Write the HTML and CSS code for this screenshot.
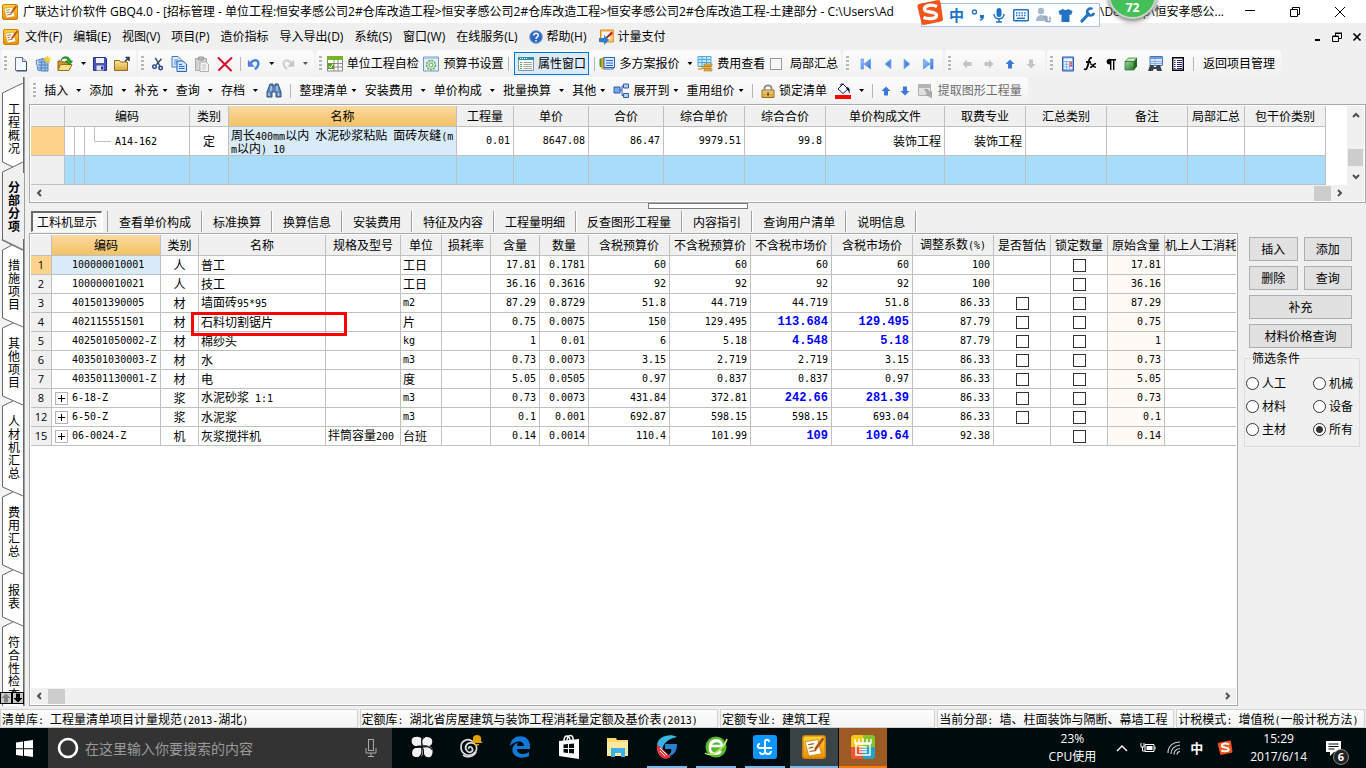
FILE: index.html
```html
<!DOCTYPE html>
<html lang="zh-CN">
<head>
<meta charset="utf-8">
<title>广联达计价软件 GBQ4.0</title>
<link rel="stylesheet" href="styles.css">
</head>
<body>
<svg class="defs" aria-hidden="true">
  <defs>
    <linearGradient id="gOrange" x1="0" y1="0" x2="0" y2="1"><stop offset="0" stop-color="#ffd83a"/><stop offset="1" stop-color="#f08c00"/></linearGradient>
    <linearGradient id="gBlue" x1="0" y1="0" x2="1" y2="1"><stop offset="0" stop-color="#a9cdf8"/><stop offset="1" stop-color="#2f6fd6"/></linearGradient>
    <linearGradient id="gGold" x1="0" y1="0" x2="0" y2="1"><stop offset="0" stop-color="#fbe7a0"/><stop offset="1" stop-color="#dba63a"/></linearGradient>
    <linearGradient id="gGreen" x1="0" y1="0" x2="1" y2="1"><stop offset="0" stop-color="#9ad89a"/><stop offset="1" stop-color="#1f7a2a"/></linearGradient>
    <symbol id="i-app" viewBox="0 0 16 16"><rect x=".5" y=".5" width="15" height="15" rx="1.5" fill="url(#gOrange)" stroke="#d07c08"/><path d="M2 4.5 10.500 3 13 12.500 4.500 14z" fill="#fffdf0" stroke="#c98a1c" stroke-width=".6"/><path d="M4 6.500l4-.8M4.500 8.700l3-.6M5 11l4.500-.8" stroke="#9a6420" stroke-width=".8"/><path d="M13.500 1.500 8.500 8.500l-.3 2 1.700-.9L15 2.700z" fill="#b4501a"/></symbol>
    <symbol id="i-new" viewBox="0 0 16 16"><path d="M2.500 1.500h7l4 4v9h-11z" fill="#f4f9ff" stroke="#5f7894"/><path d="M9.500 1.500v4h4" fill="#cfe0f2" stroke="#5f7894"/><path d="M13.500 6v9h-10" fill="none" stroke="#33465c"/></symbol>
    <symbol id="i-grid" viewBox="0 0 16 16"><path d="M1 4.500 8 2.500v12H3z" fill="#cfe2f8" stroke="#5485c0"/><path d="M7 3h6v12H6z" fill="#9fc1ea" stroke="#5485c0"/><path d="M3 6h9M3 9h10M3 12h10M5 4v10M10 4v11" stroke="#4a7dba" stroke-width=".8"/><path d="M12.500 0v7M9 3.500h7M10 1l5 5M15 1l-5 5" stroke="#f6cf2c" stroke-width="1.200"/></symbol>
    <symbol id="i-open" viewBox="0 0 16 16"><path d="M1 5h4l1 1h6v8H1z" fill="#c89633" stroke="#8a6414"/><path d="M3.500 8.500H15l-3 6H1z" fill="#fbe08a" stroke="#9a7018"/><path d="M4 4c3-3 7-2 7 1h-2.500l4 4 3-4h-2C13 0 6-1 4 4z" fill="#2faa2f" stroke="#137013" stroke-width=".7"/></symbol>
    <symbol id="i-save" viewBox="0 0 16 16"><path d="M1.500 1.500h12l1 1v12h-13z" fill="#4a55b8" stroke="#262f80"/><path d="M4 2h8v5H4z" fill="#eef1ff"/><path d="M4.500 9.500h7v5h-7z" fill="#dfe3f3"/><path d="M9 10.500h2v3H9z" fill="#262f80"/></symbol>
    <symbol id="i-folder" viewBox="0 0 16 16"><path d="M.5 4.500h5l1 1.500h7v8.500H.5z" fill="url(#gGold)" stroke="#8e6a1c"/><path d="M11 5.500 14.500 2M11.500 1.500h3.500v3.500" stroke="#25344c" stroke-width="1.500" fill="none"/></symbol>
    <symbol id="i-cut" viewBox="0 0 16 16"><path d="M5 1l5 9M12 2 6 9" stroke="#33465c" stroke-width="1.600"/><circle cx="4" cy="11" r="2" fill="none" stroke="#1d3f94" stroke-width="1.700"/><circle cx="11" cy="12.500" r="2" fill="none" stroke="#1d3f94" stroke-width="1.700"/></symbol>
    <symbol id="i-copy" viewBox="0 0 16 16"><path d="M1 .5h6l3 3V11H1z" fill="#ddebfb" stroke="#3a78c4"/><path d="M3 4h4M3 6h4M3 8h3" stroke="#5a94d8"/><path d="M6 5h6l3.500 3v7.500H6z" fill="#cfe3fa" stroke="#2563b5"/><path d="M8 8.500h3M8 10.500h5.500M8 12.500h5.500" stroke="#2f6fc4"/></symbol>
    <symbol id="i-paste" viewBox="0 0 16 16"><path d="M1.500 2.500h11v12h-11z" fill="#d3d3d3" stroke="#a9a9a9"/><path d="M4.500 1h5v3h-5z" fill="#bbb" stroke="#999"/><path d="M6 6h6l2.500 2v7.500H6z" fill="#f3f3f3" stroke="#b0b0b0"/><path d="M8 9h4M8 11h4M8 13h4" stroke="#c4c4c4"/></symbol>
    <symbol id="i-x" viewBox="0 0 16 16"><path d="M1.500 2 14 14.500M14.500 2 2 14" stroke="#d3142a" stroke-width="2" stroke-linecap="round"/></symbol>
    <symbol id="i-undo" viewBox="0 0 16 16"><path d="M4 8C6 3 13 2 13 7.500c0 3-2 5-4 6.500" fill="none" stroke="#4b83dc" stroke-width="2.800"/><path d="M1 3v8h8z" fill="#4b83dc"/></symbol>
    <symbol id="i-redo" viewBox="0 0 16 16"><path d="M12 8C10 3 3 2 3 7.500c0 3 2 5 4 6.500" fill="none" stroke="#cfcfcf" stroke-width="2.400"/><path d="M15 3v8H7z" fill="#c6c6c6"/></symbol>
    <symbol id="i-check" viewBox="0 0 16 16"><path d="M.5 1h15v14H.5z" fill="#fff" stroke="#888"/><path d="M0 0h16v4H0z" fill="#72b626"/><path d="M.5 7.500h15M.5 11h15M7 4v11M11 4v11" stroke="#888"/><path d="M1 7h6v6H1z" fill="#5aa01c"/><path d="M2 10l1.500 2L6 8" stroke="#fff" fill="none"/></symbol>
    <symbol id="i-gear" viewBox="0 0 16 16"><path d="M.5 1h15v14H.5z" fill="#e3eef8" stroke="#7797b4"/><path d="M1 1h14v2H1z" fill="#a9c7e6"/><circle cx="8" cy="9" r="4.500" fill="#d5efd5" stroke="#5da45d" stroke-width="1.500" stroke-dasharray="2 1"/><circle cx="8" cy="9" r="2" fill="#fff" stroke="#5da45d"/></symbol>
    <symbol id="i-prop" viewBox="0 0 16 16"><path d="M.5 1.500h15v13H.5z" fill="#f7fbf7" stroke="#87909a"/><path d="M0 1h16v3H0z" fill="#2c8fa8"/><path d="M2 2.500h8" stroke="#fff" stroke-dasharray="1 1"/><path d="M2 6.500h2M2 8.500h2M2 10.500h2M2 12.500h2" stroke="#58a858"/><path d="M5.500 6.500H14M5.500 8.500H14M5.500 10.500H14M5.500 12.500H14" stroke="#a3aaa3"/></symbol>
    <symbol id="i-multi" viewBox="0 0 16 16"><path d="M.5 3 2.500 2v10l-2-2z" fill="#29a329"/><path d="M2.500 2.500 5 1.500v12L2.500 12z" fill="#f2a51c" stroke="#b87d12" stroke-width=".5"/><path d="M5 1.500h10.500v10H5z" fill="#d9ebff" stroke="#2765c6"/><path d="M7 4.500h7M7 7h7M7 9.500h7" stroke="#2765c6"/><path d="M5 13h9l1-1.500" stroke="#2765c6" fill="none"/></symbol>
    <symbol id="i-fee" viewBox="0 0 16 16"><path d="M1 .5h13v10H1z" fill="#bfe5fb" stroke="#56a7da"/><path d="M1 3.500h13M1 6.500h13M5 1v10M9.500 1v10" stroke="#56a7da"/><path d="M7 8h8v2H7zM5 10.500h9v2H5zM7 13h8v2H7z" fill="#e8b64c" stroke="#a87418" stroke-width=".6"/><path d="M1 12h4v2H1z" fill="#e8b64c"/></symbol>
    <symbol id="i-first" viewBox="0 0 12 12"><path d="M1 1h2.500v10H1zM10.500 1v10L4 6z" fill="url(#gBlue)" stroke="#5d94e8" stroke-width=".7"/></symbol>
    <symbol id="i-prev" viewBox="0 0 8 12"><path d="M7 1v10L1 6z" fill="#4f87e0" stroke="#8ab3f0" stroke-width=".8"/></symbol>
    <symbol id="i-next" viewBox="0 0 8 12"><path d="M1 1v10l6-5z" fill="#4f87e0" stroke="#8ab3f0" stroke-width=".8"/></symbol>
    <symbol id="i-last" viewBox="0 0 12 12"><path d="M8.500 1H11v10H8.500zM1.500 1v10L8 6z" fill="url(#gBlue)" stroke="#5d94e8" stroke-width=".7"/></symbol>
    <symbol id="i-up" viewBox="0 0 10 10"><path d="M5 .5 9.500 5H7v4.500H3V5H.5z"/></symbol>
    <symbol id="i-down" viewBox="0 0 10 10"><path d="M5 9.500.5 5H3V.5h4V5h2.500z"/></symbol>
    <symbol id="i-left" viewBox="0 0 10 10"><path d="M.5 5 5 .5V3h4.500v4H5v2.500z"/></symbol>
    <symbol id="i-right" viewBox="0 0 10 10"><path d="M9.500 5 5 .5V3H.5v4H5v2.500z"/></symbol>
    <symbol id="i-calc" viewBox="0 0 12 16"><path d="M.5 1h11v14H.5z" fill="#8fb2ea" stroke="#2f57a4"/><path d="M2 2.500h8v2.500H2z" fill="#eef5ff"/><path d="M2 7h8M2 9.500h8M2 12h8" stroke="#fff" stroke-width="1.500" stroke-dasharray="2 1"/><path d="M8 7h2M8 9.500h2" stroke="#d33" stroke-width="1.500"/></symbol>
    <symbol id="i-fx" viewBox="0 0 14 14"><path d="M9 1C6 0 6 4 5 8s-2 5-4 4M3 5h5" fill="none" stroke="#000" stroke-width="1.800"/><path d="M7 7c3-1 2 4 6 3M13 6.500c-3 0-3 4-6 4" fill="none" stroke="#000" stroke-width="1.400"/></symbol>
    <symbol id="i-para" viewBox="0 0 10 12"><path d="M4 1h6v1.500H4zM4 .8C-.5.8-.5 6.500 4 6.500z"/><path d="M4.700 1v11M7.700 1v11" stroke="#000" stroke-width="1.400"/></symbol>
    <symbol id="i-cube" viewBox="0 0 14 14"><path d="M1 4.500 4.500 1H13L10 4.500z" fill="#bfe8b6" stroke="#2c6a2c" stroke-width=".7"/><path d="M1 4.500h9V13H1z" fill="url(#gGreen)" stroke="#2c6a2c" stroke-width=".7"/><path d="M10 4.500 13 1v8.500L10 13z" fill="#236323"/></symbol>
    <symbol id="i-findwin" viewBox="0 0 16 16"><path d="M3 .5h12.500v9H3z" fill="#dbe8fa" stroke="#4677bd"/><path d="M3 1h12.500v2H3z" fill="#6d9be0"/><path d="M4 5.500h11M4 7.500h11M8 3v6" stroke="#8caedd"/><path d="M3 9h3l1 2h2l1-2h3l2 6h-5l-.5-2h-3L6 15H1z" fill="#39424f"/></symbol>
    <symbol id="i-list" viewBox="0 0 12 14"><path d="M.7.700h10.600v12.600H.7z" fill="#fff" stroke="#000" stroke-width="1.400"/><path d="M2 3.500h1.500M5 3.500h5M2 5.500h1.500M5 5.500h5M2 7.500h1.500M5 7.500h5M2 9.500h1.500M5 9.500h5M2 11.500h1.500M5 11.500h5" stroke="#22227a"/></symbol>
    <symbol id="i-binoc" viewBox="0 0 16 16"><path d="M4 1h3v2h2V1h3l3 8v5h-5V9H6v5H1V9z" fill="#5f86b8" stroke="#31527f"/><path d="M5 3v5M11 3v5M3 10v3M12.500 10v3" stroke="#c5daf2" stroke-width="1.200"/></symbol>
    <symbol id="i-tree" viewBox="0 0 16 16"><path d="M1 4h6v6H1z" fill="#79a7ea" stroke="#2d5daa"/><path d="M10.500 1h5v4h-5zM10.500 10.500h5v4h-5z" fill="#b3d0f7" stroke="#2d5daa"/><path d="M7 7h2M10 3H9v9.500h1.500" stroke="#2d5daa" fill="none"/></symbol>
    <symbol id="i-lock" viewBox="0 0 14 14"><path d="M3.500 6V4C3.500.500 10.500.500 10.500 4v2" fill="none" stroke="#8d8d8d" stroke-width="1.800"/><path d="M1 6h12v7.500H1z" fill="url(#gGold)" stroke="#9a6f18"/><path d="M1.500 8h11M1.500 10.500h11" stroke="#c38f2c" stroke-width=".7"/><path d="M6.300 8.500h1.500v3H6.300z" fill="#503800"/></symbol>
    <symbol id="i-fill" viewBox="0 0 16 16"><path d="M0 12h16v4H0z" fill="red"/><path d="M3 6 8 1l5 5-5 4.500z" fill="#fff" stroke="#16165c"/><path d="M6 3v-2h2.500" stroke="#16165c" fill="none"/><path d="M11 4c4 0 4 3 3.500 7-1-3-1.500-4-3-5z" fill="#12124c"/></symbol>
    <symbol id="i-extract" viewBox="0 0 16 16"><path d="M.5 1.500h12v11H.5z" fill="#e0e0e0" stroke="#b0b0b0"/><path d="M0 1h13v4H0z" fill="#b4b4b4"/><path d="M6 6l3 5-2 .5 7 4V8l-2 1-2.500-3z" fill="#a9a9a9"/></symbol>
    <symbol id="i-help" viewBox="0 0 14 14"><circle cx="7" cy="7" r="6.400" fill="#2d67c4" stroke="#8aa7d0"/><path d="M4.700 5.500C4.700 2.500 9.500 2.700 9.300 5.400 9.200 7 7 6.800 7 9M7 10v1.600" fill="none" stroke="#fff" stroke-width="1.500"/></symbol>
    <symbol id="i-pay" viewBox="0 0 16 16"><path d="M2.500 1h12.800v12H2.500z" fill="#f7cf80" stroke="#e28a18"/><path d="M4 3h8v7H4z" fill="#fff"/><path d="M13.500 2.500 7 9l1.500 1L15 4.500z" fill="#c02020"/><path d="M1 9h5V6l5 5-5 5v-3H1z" fill="#2f7ecb"/></symbol>
    <symbol id="i-sogou" viewBox="0 0 28 28"><path d="M3 5 22 1q2 0 2.500 2L27 20q0 2-2 2.500L8 26q-2 .5-2.500-2L1.500 8Q1 5.500 3 5z" fill="#f2541b"/><path d="M21 7.500C14 4.500 8 7 8.500 10.500S20 12 20.500 16 13 20.500 7.500 18.500" fill="none" stroke="#fff" stroke-width="3.400"/></symbol>
  </defs>
</svg>

<header class="titlebar">
  <svg class="ic16"><use href="#i-app"/></svg>
  <span class="title-text">广联达计价软件 GBQ4.0 - [招标管理 - 单位工程:恒安孝感公司2#仓库改造工程&gt;恒安孝感公司2#仓库改造工程&gt;恒安孝感公司2#仓库改造工程-土建部分 - C:\Users\Ad</span>
  <span class="title-end"><span>\De</span><span>p\恒安孝感公...</span></span>
  <div class="winbtns">
    <button aria-label="最小化"><svg width="12" height="12"><path d="M1 4.500h10" stroke="#000"/></svg></button>
    <button aria-label="还原"><svg width="12" height="12"><path d="M1.500 3.500h7v7h-7zM3.500 3V1.500h7v7H9" fill="none" stroke="#000"/></svg></button>
    <button aria-label="关闭"><svg width="12" height="12"><path d="M1 1l10 10M11 1 1 11" stroke="#000"/></svg></button>
  </div>
  <div class="ime">
    <svg class="ime-logo"><use href="#i-sogou"/></svg>
    <b>中</b>
    <svg width="14" height="16"><circle cx="3.500" cy="5" r="2" fill="none" stroke="#2272c4" stroke-width="1.400"/><path d="M9 8h4c0 4-1 5-4 6l-.3-1.500c1.500-.5 1.800-1 1.800-1.500H9z" fill="#2272c4"/></svg>
    <svg width="14" height="16"><rect x="4.500" y="1" width="5" height="9" rx="2.500" fill="#2272c4"/><path d="M2 7c0 6.500 10 6.500 10 0M7 12v3M4 15h6" fill="none" stroke="#2272c4" stroke-width="1.500"/></svg>
    <svg width="16" height="14"><rect x=".7" y="1.700" width="14.600" height="11" rx="1" fill="#fff" stroke="#2272c4" stroke-width="1.500"/><path d="M3 5h10.500M3 7.500h10.500" stroke="#2272c4" stroke-width="1.500" stroke-dasharray="1.500 1.200"/><path d="M4 10.300h8" stroke="#2272c4" stroke-width="1.500"/></svg>
    <svg width="16" height="16"><circle cx="6" cy="4" r="3.200" fill="#a9b8cc"/><path d="M1 14c0-8 10-8 10 0z" fill="#a9b8cc"/><path d="M8 9.500h3V15M12 9.500v5.200h3V9.500" fill="none" stroke="#8fa3be" stroke-width="1.300"/></svg>
    <svg width="15" height="16"><path d="M5 2c1.500 1.500 3.500 1.500 5 0l4.500 2-1.300 4-1.700-.5V15h-8V7.500L1.800 8 .5 4z" fill="#2272c4"/></svg>
    <svg width="15" height="16"><path d="M2 14 8.500 7" stroke="#2272c4" stroke-width="3.200" stroke-linecap="round"/><path d="M12.500 2A3.500 3.500 0 1 0 14 6" fill="none" stroke="#2272c4" stroke-width="2.600"/></svg>
  </div>
  <div class="ball">72</div>
</header>

<nav class="menubar">
  <svg class="ic16"><use href="#i-app"/></svg>
  <button>文件(F)</button><button>编辑(E)</button><button>视图(V)</button><button>项目(P)</button><button>造价指标</button><button>导入导出(D)</button><button>系统(S)</button><button>窗口(W)</button><button>在线服务(L)</button>
  <button class="with-ic"><svg class="ic14"><use href="#i-help"/></svg>帮助(H)</button>
  <button class="with-ic"><svg class="ic16"><use href="#i-pay"/></svg>计量支付</button>
  <div class="mdi">
    <button aria-label="最小化窗口"><svg width="8" height="10"><path d="M1 8h5" stroke="#000" stroke-width="2"/></svg></button>
    <button aria-label="还原窗口"><svg width="10" height="10"><path d="M.5 4.500h6v5h-6zM3.500 4V1.500h6v5H7M.5 4h6M3 1h7" fill="none" stroke="#000"/></svg></button>
    <button aria-label="关闭窗口"><svg width="10" height="10"><path d="M1.500 1.500l7 7M8.500 1.500l-7 7" stroke="#000" stroke-width="1.700"/></svg></button>
  </div>
</nav>

<div class="toolrow">
  <div class="tg g1"><i class="grip"></i><button aria-label="新建"><svg class="ic16"><use href="#i-new"/></svg></button><button aria-label="新建工程"><svg class="ic16"><use href="#i-grid"/></svg></button><button aria-label="打开" class="dd"><svg class="ic16"><use href="#i-open"/></svg><i class="arr"></i></button><button aria-label="保存"><svg class="ic16"><use href="#i-save"/></svg></button><button aria-label="另存"><svg class="ic16"><use href="#i-folder"/></svg></button></div>
  <div class="tg g2"><i class="grip"></i><button aria-label="剪切"><svg class="ic14"><use href="#i-cut"/></svg></button><button aria-label="复制"><svg class="ic16"><use href="#i-copy"/></svg></button><button aria-label="粘贴"><svg class="ic16"><use href="#i-paste"/></svg></button><button aria-label="删除"><svg class="ic16"><use href="#i-x"/></svg></button><i class="sep"></i><button aria-label="撤消" class="dd"><svg class="ic14"><use href="#i-undo"/></svg><i class="arr"></i></button><button aria-label="恢复" class="dd"><svg class="ic14"><use href="#i-redo"/></svg><i class="arr dim"></i></button></div>
  <div class="tg g3"><i class="grip"></i><button class="lb"><svg class="ic16"><use href="#i-check"/></svg>单位工程自检</button><button class="lb"><svg class="ic16"><use href="#i-gear"/></svg>预算书设置</button><i class="sep"></i><button class="lb pressed"><svg class="ic16"><use href="#i-prop"/></svg>属性窗口</button><i class="sep"></i><button class="dd"><span class="lb"><svg class="ic16"><use href="#i-multi"/></svg>多方案报价</span><i class="arr"></i></button><button class="lb"><svg class="ic16"><use href="#i-fee"/></svg>费用查看</button><label class="partial"><input type="checkbox">局部汇总</label></div>
  <div class="tg g4"><i class="grip"></i><button aria-label="首个"><svg width="12" height="12"><use href="#i-first"/></svg></button><button aria-label="上一个"><svg width="8" height="12"><use href="#i-prev"/></svg></button><button aria-label="下一个"><svg width="8" height="12"><use href="#i-next"/></svg></button><button aria-label="末个"><svg width="12" height="12"><use href="#i-last"/></svg></button></div>
  <div class="tg g4"><i class="grip"></i><button aria-label="左移" class="ar off"><svg class="ic10"><use href="#i-left"/></svg></button><button aria-label="右移" class="ar off"><svg class="ic10"><use href="#i-right"/></svg></button><button aria-label="上移" class="ar"><svg class="ic10"><use href="#i-up"/></svg></button><button aria-label="下移" class="ar off"><svg class="ic10"><use href="#i-down"/></svg></button></div>
  <div class="tg g6"><i class="grip"></i><button aria-label="计算器"><svg width="12" height="16"><use href="#i-calc"/></svg></button><button aria-label="函数"><svg class="ic14"><use href="#i-fx"/></svg></button><button aria-label="段落"><svg width="10" height="12"><use href="#i-para"/></svg></button><button aria-label="图形"><svg class="ic14"><use href="#i-cube"/></svg></button><button aria-label="查找"><svg class="ic16"><use href="#i-findwin"/></svg></button><button aria-label="列表"><svg width="12" height="14"><use href="#i-list"/></svg></button><i class="sep"></i><button>返回项目管理</button></div>
</div>

<div class="body">
  <nav class="side">
    <div class="side-top"></div>
    <svg class="joint" viewBox="0 0 24 12"><path d="M2.500 12V10L23 0v12z" fill="#fff"/><path d="M2.500 12V10L23 0" fill="none" stroke="#696969"/></svg>
    <a href="#gk">工程概况</a>
    <svg class="joint" viewBox="0 0 24 12"><path d="M2 0h22v12H2z" fill="#f0f0f0"/><path d="M3 0h20v1L12 6z" fill="#fff"/><path d="M2.500 0v1L13 6M2.500 12v-1L23 1" fill="none" stroke="#696969"/></svg>
    <a href="#fb" class="on" aria-current="page">分部分项</a>
    <svg class="joint" viewBox="0 0 24 12"><path d="M3 0h20v11z" fill="#f0f0f0"/><path d="M3 12v-1L13 6l10 5v1z" fill="#fff"/><path d="M2.500 12v-1L12 6" fill="none" stroke="#696969"/><path d="M2.500 0v1L23 11" fill="none" stroke="#7a7a7a" stroke-width="1.600"/></svg>
    <a href="#cs">措施项目</a>
    <svg class="joint" viewBox="0 0 24 12"><path d="M3 0h20v12H3l10-6z" fill="#fff"/><path d="M2.500 0v1L23 10M2.500 12v-1L13 6" fill="none" stroke="#696969"/></svg>
    <a href="#qt">其他项目</a>
    <svg class="joint" viewBox="0 0 24 12"><path d="M3 0h20v12H3l10-6z" fill="#fff"/><path d="M2.500 0v1L23 10M2.500 12v-1L13 6" fill="none" stroke="#696969"/></svg>
    <a href="#rc">人材机汇总</a>
    <svg class="joint" viewBox="0 0 24 12"><path d="M3 0h20v12H3l10-6z" fill="#fff"/><path d="M2.500 0v1L23 10M2.500 12v-1L13 6" fill="none" stroke="#696969"/></svg>
    <a href="#fy">费用汇总</a>
    <svg class="joint" viewBox="0 0 24 12"><path d="M3 0h20v12H3l10-6z" fill="#fff"/><path d="M2.500 0v1L23 10M2.500 12v-1L13 6" fill="none" stroke="#696969"/></svg>
    <a href="#bb">报表</a>
    <svg class="joint" viewBox="0 0 24 12"><path d="M3 0h20v12H3l10-6z" fill="#fff"/><path d="M2.500 0v1L23 10M2.500 12v-1L13 6" fill="none" stroke="#696969"/></svg>
    <a href="#fh">符合性检查</a>
    <div class="side-scroll">
      <button aria-label="向上" disabled><svg class="ic10" fill="#808080"><use href="#i-up"/></svg></button>
      <button aria-label="向下"><svg class="ic10"><use href="#i-down"/></svg></button>
    </div>
  </nav>

  <div class="work">
    <div class="toolrow second">
      <div class="tg g7"><i class="grip"></i>
        <button class="dd">插入<i class="arr"></i></button><button class="dd">添加<i class="arr"></i></button><button class="dd tight">补充<i class="arr"></i></button><button class="dd">查询<i class="arr"></i></button><button class="dd">存档<i class="arr"></i></button><button aria-label="查找"><svg class="ic16"><use href="#i-binoc"/></svg></button><i class="sep"></i><button class="dd tight">整理清单<i class="arr"></i></button><button class="dd">安装费用<i class="arr"></i></button><button class="dd">单价构成<i class="arr"></i></button><button class="dd">批量换算<i class="arr"></i></button><button class="dd tight">其他<i class="arr"></i></button><button class="dd tight"><svg class="ic16"><use href="#i-tree"/></svg>展开到<i class="arr"></i></button><button class="dd tight">重用组价<i class="arr"></i></button><i class="sep"></i><button class="lb"><svg class="ic14"><use href="#i-lock"/></svg>锁定清单</button><button class="dd" aria-label="填充颜色"><svg class="ic16"><use href="#i-fill"/></svg><i class="arr"></i></button><i class="sep"></i><button aria-label="上移" class="ar"><svg class="ic10"><use href="#i-up"/></svg></button><button aria-label="下移" class="ar"><svg class="ic10"><use href="#i-down"/></svg></button><button class="lb muted"><svg class="ic16"><use href="#i-extract"/></svg>提取图形工程量</button>
      </div>
    </div>

    <section class="panel top">
      <div class="top-view">
        <div class="clip">
          <table class="grid upper">
            <colgroup><col class="w34"><col class="w125"><col class="w39"><col class="w228"><col class="w57"><col class="w75"><col class="w75"><col class="w81"><col class="w81"><col class="w119"><col class="w81"><col class="w81"><col class="w81"><col class="w57"><col class="w81"></colgroup>
            <thead><tr><th></th><th>编码</th><th>类别</th><th class="sel">名称</th><th>工程量</th><th>单价</th><th>合价</th><th>综合单价</th><th>综合合价</th><th>单价构成文件</th><th>取费专业</th><th>汇总类别</th><th>备注</th><th>局部汇总</th><th>包干价类别</th></tr></thead>
            <tbody>
              <tr><td class="cur"></td><td class="tree n"><svg width="50" height="28"><path d="M9.500 0v28M19.500 0v28M29.500 0v14.500H46" fill="none" stroke="#c0c0c0"/></svg><span>A14-162</span></td><td class="c">定</td><td class="name">周长<span class="n">400mm</span>以内<span class="n"> </span>水泥砂浆粘贴<span class="n"> </span>面砖灰缝<span class="n">(m</span><br><span class="n">m</span>以内<span class="n">) 10</span></td><td class="r n">0.01</td><td class="r n">8647.08</td><td class="r n">86.47</td><td class="r n">9979.51</td><td class="r n">99.8</td><td class="r">装饰工程</td><td class="r">装饰工程</td><td></td><td></td><td></td><td></td></tr>
              <tr class="hl"><td></td><td class="tree"><svg width="50" height="28"><path d="M9.500 0v28M19.500 0v28" fill="none" stroke="#c0c0c0"/></svg></td><td></td><td></td><td></td><td></td><td></td><td></td><td></td><td></td><td></td><td></td><td></td><td></td><td></td></tr>
            </tbody>
          </table>
        </div>
        <div class="vscroll"><svg width="8" height="6"><path d="M1 5l3-3 3 3" fill="none" stroke="#505050" stroke-width="2"/></svg><i></i><svg width="8" height="6"><path d="M1 1l3 3 3-3" fill="none" stroke="#505050" stroke-width="2"/></svg></div>
      </div>
      <div class="hscroll end"><svg width="6" height="8"><path d="M5 1 2 4l3 3" fill="none" stroke="#505050" stroke-width="2"/></svg><i></i><svg width="6" height="8"><path d="M1 1l3 3-3 3" fill="none" stroke="#505050" stroke-width="2"/></svg></div>
    </section>

    <div class="splitter"><i></i></div>

    <div class="tabs" role="tablist">
      <button role="tab" aria-selected="true" class="active">工料机显示</button><button role="tab">查看单价构成</button><button role="tab">标准换算</button><button role="tab">换算信息</button><button role="tab">安装费用</button><button role="tab">特征及内容</button><button role="tab">工程量明细</button><button role="tab">反查图形工程量</button><button role="tab">内容指引</button><button role="tab">查询用户清单</button><button role="tab">说明信息</button>
    </div>

    <div class="lower-row">
      <section class="panel bottom">
        <div class="clip fill">
          <table class="grid lower">
            <colgroup><col class="w21"><col class="w109"><col class="w38"><col class="w127"><col class="w75"><col class="w41"><col class="w49"><col class="w49"><col class="w49"><col class="w81"><col class="w81"><col class="w81"><col class="w81"><col class="w81"><col class="w57"><col class="w57"><col class="w57"><col class="w81"></colgroup>
            <thead><tr><th></th><th class="sel">编码</th><th>类别</th><th>名称</th><th>规格及型号</th><th>单位</th><th>损耗率</th><th>含量</th><th>数量</th><th>含税预算价</th><th>不含税预算价</th><th>不含税市场价</th><th>含税市场价</th><th>调整系数<span class="n">(%)</span></th><th>是否暂估</th><th>锁定数量</th><th>原始含量</th><th class="l">机上人工消耗</th></tr></thead>
            <tbody>
              <tr><td class="no cur">1</td><td class="n code pick">100000010001</td><td class="c">人</td><td>普工</td><td></td><td>工日</td><td></td><td class="r n">17.81</td><td class="r n">0.1781</td><td class="r n">60</td><td class="r n">60</td><td class="r n">60</td><td class="r n">60</td><td class="r n">100</td><td></td><td class="c"><input type="checkbox" aria-label="锁定数量 1"></td><td class="r n org">17.81</td><td></td></tr>
              <tr><td class="no">2</td><td class="n code">100000010021</td><td class="c">人</td><td>技工</td><td></td><td>工日</td><td></td><td class="r n">36.16</td><td class="r n">0.3616</td><td class="r n">92</td><td class="r n">92</td><td class="r n">92</td><td class="r n">92</td><td class="r n">100</td><td></td><td class="c"><input type="checkbox" aria-label="锁定数量 2"></td><td class="r n org">36.16</td><td></td></tr>
              <tr><td class="no">3</td><td class="n code">401501390005</td><td class="c">材</td><td>墙面砖<span class="n">95*95</span></td><td></td><td class="n">m2</td><td></td><td class="r n">87.29</td><td class="r n">0.8729</td><td class="r n">51.8</td><td class="r n">44.719</td><td class="r n">44.719</td><td class="r n">51.8</td><td class="r n">86.33</td><td class="c"><input type="checkbox" aria-label="是否暂估 3"></td><td class="c"><input type="checkbox" aria-label="锁定数量 3"></td><td class="r n org">87.29</td><td></td></tr>
              <tr><td class="no">4</td><td class="n code">402115551501</td><td class="c">材</td><td class="host">石料切割锯片<i class="redbox"></i></td><td></td><td>片</td><td></td><td class="r n">0.75</td><td class="r n">0.0075</td><td class="r n">150</td><td class="r n">129.495</td><td class="r n b">113.684</td><td class="r n b">129.495</td><td class="r n">87.79</td><td class="c"><input type="checkbox" aria-label="是否暂估 4"></td><td class="c"><input type="checkbox" aria-label="锁定数量 4"></td><td class="r n org">0.75</td><td></td></tr>
              <tr><td class="no">5</td><td class="n code">402501050002-Z</td><td class="c">材</td><td>棉纱头</td><td></td><td class="n">kg</td><td></td><td class="r n">1</td><td class="r n">0.01</td><td class="r n">6</td><td class="r n">5.18</td><td class="r n b">4.548</td><td class="r n b">5.18</td><td class="r n">87.79</td><td class="c"><input type="checkbox" aria-label="是否暂估 5"></td><td class="c"><input type="checkbox" aria-label="锁定数量 5"></td><td class="r n org">1</td><td></td></tr>
              <tr><td class="no">6</td><td class="n code">403501030003-Z</td><td class="c">材</td><td>水</td><td></td><td class="n">m3</td><td></td><td class="r n">0.73</td><td class="r n">0.0073</td><td class="r n">3.15</td><td class="r n">2.719</td><td class="r n">2.719</td><td class="r n">3.15</td><td class="r n">86.33</td><td class="c"><input type="checkbox" aria-label="是否暂估 6"></td><td class="c"><input type="checkbox" aria-label="锁定数量 6"></td><td class="r n org">0.73</td><td></td></tr>
              <tr><td class="no">7</td><td class="n code">403501130001-Z</td><td class="c">材</td><td>电</td><td></td><td>度</td><td></td><td class="r n">5.05</td><td class="r n">0.0505</td><td class="r n">0.97</td><td class="r n">0.837</td><td class="r n">0.837</td><td class="r n">0.97</td><td class="r n">86.33</td><td class="c"><input type="checkbox" aria-label="是否暂估 7"></td><td class="c"><input type="checkbox" aria-label="锁定数量 7"></td><td class="r n org">5.05</td><td></td></tr>
              <tr><td class="no">8</td><td class="n"><button class="exp" aria-label="展开"></button>6-18-Z</td><td class="c">浆</td><td>水泥砂浆<span class="n"> 1:1</span></td><td></td><td class="n">m3</td><td></td><td class="r n">0.73</td><td class="r n">0.0073</td><td class="r n">431.84</td><td class="r n">372.81</td><td class="r n b">242.66</td><td class="r n b">281.39</td><td class="r n">86.33</td><td class="c"><input type="checkbox" aria-label="是否暂估 8"></td><td class="c"><input type="checkbox" aria-label="锁定数量 8"></td><td class="r n org">0.73</td><td></td></tr>
              <tr><td class="no">12</td><td class="n"><button class="exp" aria-label="展开"></button>6-50-Z</td><td class="c">浆</td><td>水泥浆</td><td></td><td class="n">m3</td><td></td><td class="r n">0.1</td><td class="r n">0.001</td><td class="r n">692.87</td><td class="r n">598.15</td><td class="r n">598.15</td><td class="r n">693.04</td><td class="r n">86.33</td><td class="c"><input type="checkbox" aria-label="是否暂估 12"></td><td class="c"><input type="checkbox" aria-label="锁定数量 12"></td><td class="r n org">0.1</td><td></td></tr>
              <tr><td class="no">15</td><td class="n"><button class="exp" aria-label="展开"></button>06-0024-Z</td><td class="c">机</td><td>灰浆搅拌机</td><td>拌筒容量<span class="n">200</span></td><td>台班</td><td></td><td class="r n">0.14</td><td class="r n">0.0014</td><td class="r n">110.4</td><td class="r n">101.99</td><td class="r n b">109</td><td class="r n b">109.64</td><td class="r n">92.38</td><td></td><td class="c"><input type="checkbox" aria-label="锁定数量 15"></td><td class="r n org">0.14</td><td></td></tr>
            </tbody>
          </table>
        </div>
        <div class="hscroll"><svg width="6" height="8"><path d="M5 1 2 4l3 3" fill="none" stroke="#505050" stroke-width="2"/></svg><i></i><svg width="6" height="8"><path d="M1 1l3 3-3 3" fill="none" stroke="#505050" stroke-width="2"/></svg></div>
      </section>

      <aside class="actions">
        <div class="btns"><button>插入</button><button>添加</button><button>删除</button><button>查询</button><button class="wide">补充</button><button class="wide">材料价格查询</button></div>
        <fieldset>
          <legend>筛选条件</legend>
          <label><input type="radio" name="flt">人工</label><label><input type="radio" name="flt">机械</label>
          <label><input type="radio" name="flt">材料</label><label><input type="radio" name="flt">设备</label>
          <label><input type="radio" name="flt">主材</label><label><input type="radio" name="flt" checked>所有</label>
        </fieldset>
      </aside>
    </div>
  </div>
</div>

<footer class="status">
  <span class="s1">清单库<span class="n">: </span>工程量清单项目计量规范<span class="n">(2013-</span>湖北<span class="n">)</span></span>
  <span class="s2">定额库<span class="n">: </span>湖北省房屋建筑与装饰工程消耗量定额及基价表<span class="n">(2013)</span></span>
  <span class="s3">定额专业<span class="n">: </span>建筑工程</span>
  <span class="s4">当前分部<span class="n">: </span>墙、柱面装饰与隔断、幕墙工程</span>
  <span class="s5">计税模式<span class="n">: </span>增值税<span class="n">(</span>一般计税方法<span class="n">)</span></span>
</footer>

<div class="taskbar">
  <button class="start" aria-label="开始"><svg width="17" height="17"><path d="M0 2.500 7 1.500v6.700H0zM8 1.300 17 0v8.200H8zM0 9.200h7V16l-7-1zM8 9.200h9V17l-9-1.200z" fill="#fff"/></svg></button>
  <div class="search">
    <svg width="22" height="22"><circle cx="11" cy="11" r="9" fill="none" stroke="#fff" stroke-width="2.600"/></svg>
    <input type="text" aria-label="搜索" placeholder="在这里输入你要搜索的内容">
    <svg width="12" height="18"><rect x="3.500" y=".5" width="5" height="11" fill="none" stroke="#aaa"/><path d="M1 9v5h10V9M6 14v3M3 17.500h6" fill="none" stroke="#aaa"/></svg>
  </div>
  <div class="apps">
    <button aria-label="应用"><svg width="24" height="24" fill="#f2f2f2"><path d="M11.500 11V4C11 1 3 1 2 4s0 6 3 7c3 0 5-1 6.500 0z"/><path d="M12.500 10.500C11 6 12 2 15 2s6 0 7 3-1 6-3 6-4-1-6.500-.5z"/><path d="M12.500 12C15 10 21 11 22 13s1 8-2 9-6-1-6-4 0-4-1.500-6z"/><path d="M11.500 12c2 3 2 8 0 9s-8 2-9-1 0-6 3-7 4 0 6-1z"/><path d="M15 2c-6 3-2 6-3 10s2 7-3 10M1.500 9c3 5 7 3 10.500 3s7-2 10.500 3" fill="none" stroke="#000b0d" stroke-width="1.200"/></svg></button>
    <button aria-label="通知"><svg width="30" height="30"><g fill="none" stroke="#ddd" stroke-width="1.700"><path d="M18 11c-5-6-13-3-13 4s7 10 12 7 5-10-1-11-8 5-5 8 7 0 5-3-4 0-3 1"/><path d="M20 20c-2 5-9 6-13 3"/></g><path d="M15 11c2-1 2-2 2-5 0-4 8-4 8 0 0 3 0 4 2 5z" fill="#e0a200"/><path d="M19 12h4v1.500h-4z" fill="#e0a200"/></svg></button>
    <button aria-label="Edge"><svg width="22" height="22"><path d="M1 10C2-3 21-3 21 10v3H8c0 6 8 6 12 3v4C9 25 1 18 4 11c1-2 3-4 5-4-1 1-1 2-1 3h7c0-6-9-6-14 0z" fill="#0f78d8"/></svg></button>
    <button aria-label="应用商店"><svg width="22" height="26"><path d="M1 7l20-2v20L1 22z" fill="#fff"/><path d="M6 7c0-6 5-7 6-1M9 6c1-7 7-5 6 0" fill="none" stroke="#fff" stroke-width="1.500"/><path d="M5.500 10.500 10 10v4H5.500zM11 10l5-.6V14h-5zM5.500 15H10v4l-4.500-.5zM11 15h5v4.600L11 19z" fill="#000b0d"/></svg></button>
    <button aria-label="文件资源管理器"><svg width="22" height="20"><path d="M0 1h9l1 2h11v16H0z" fill="#ffd96a"/><path d="M0 5h21v14H0z" fill="#ffe9a0"/><path d="M4 11h14v9h-4v-4H8v4H4z" fill="#3bb2ec"/></svg></button>
    <button class="run" aria-label="广联达"><svg width="24" height="26"><path d="M22 3C15-1 2 2 2 12s6 11 8 11c-5-5-4-17 12-20z" fill="#37b6e6"/><path d="M10 10h12c0 8-4 13-11 12 5-1 6-5 5-7h-6z" fill="#2a7fcf"/><path d="M2 10l14 13-5 2C5 24 1 19 2 10z" fill="#e6373f"/><path d="M5 14l7 7M5 17l5 5" stroke="#fff"/></svg></button>
    <button class="run" aria-label="浏览器"><svg width="24" height="24"><circle cx="12" cy="12" r="10.500" fill="#54b92e"/><path d="M17 8c-2-4-10-4-11 3h12c0-7-11-7-12 1s8 8 11 4" fill="none" stroke="#fff" stroke-width="2.600"/><path d="M1 18C7 23 20 14 23 4" fill="none" stroke="#b9ec6a" stroke-width="1.600"/></svg></button>
    <button class="run" aria-label="造价助手"><svg width="24" height="24"><rect width="24" height="24" rx="3" fill="#0c96ff"/><path d="M16 7c0-3-4-3-4 0v9c0 4-5 4-5 1M12 13H7c-3 0-3-4 0-4M12 13h7M12 16c0 4 6 4 6 0" fill="none" stroke="#fff" stroke-width="1.800"/></svg></button>
    <button class="run cur" aria-label="计价软件"><svg width="24" height="24"><use href="#i-app"/></svg></button>
    <button class="run hot" aria-label="截图工具"><svg width="24" height="24"><path d="M2 0h10v12H0V2z" fill="#f5c916"/><path d="M12 0h10l2 2v10H12z" fill="#86c22c"/><path d="M0 12h12v12H2l-2-2z" fill="#ee5530"/><path d="M12 12h12v10l-2 2H12z" fill="#24a3c9"/><path d="M4 4v4h16V4M8 4v4M12 3v5M16 4v4M5 20V9h14v11zM8 12h8M8 14.500h8M8 17h8" fill="none" stroke="#fff" stroke-width="1.400"/></svg></button>
  </div>
  <div class="tray">
    <div class="two">23%<br>CPU使用</div>
    <svg class="t-up" width="12" height="8"><path d="M1 7l5-5 5 5" fill="none" stroke="#fff" stroke-width="1.400"/></svg>
    <svg class="t-bat" width="16" height="12"><path d="M1 1v4h3V1M2.500 5v4H5" fill="none" stroke="#fff"/><path d="M5 2.500h9v7H5zM15 4.500v3" fill="none" stroke="#fff"/><path d="M6.500 4h6v4h-6z" fill="#fff"/></svg>
    <svg class="t-wifi" width="14" height="14"><path d="M1 12C1 5 6 1 13 1M4 13c0-5 3-8 9-9M7 13.500C7 10 9 8 13 7.500M10 13.500c0-2 1-2.800 3-3" fill="none" stroke="#ccc" stroke-width="1.200"/></svg>
    <b class="t-zh">中</b>
    <svg class="t-s" width="16" height="16"><use href="#i-sogou"/></svg>
    <div class="two clock">15:29<br>2017/6/14</div>
    <div class="note"><svg width="18" height="17"><path d="M1 1h15v11H9l-4 4v-4H1z" fill="#fff"/><path d="M3.500 4h10M3.500 6.500h10M3.500 9h6" stroke="#000b0d"/></svg><span>6</span></div>
  </div>
</div>
</body>
</html>
```
FILE: styles.css
```css
* { box-sizing: border-box; }
html, body { height: 100%; }
body {
  margin: 0; min-height: 100vh; display: flex; flex-direction: column; overflow: hidden;
  background: #f0f0f0; color: #000;
  font: 12px/16px "Open Sans", "Noto Sans CJK SC", sans-serif;
}
button { margin: 0; padding: 0; border: 0; background: none; font: inherit; color: inherit; white-space: nowrap; }
svg { display: block; flex: none; }
.defs { position: absolute; width: 0; height: 0; }
.ic16 { width: 16px; height: 16px; }
.ic14 { width: 14px; height: 14px; }
.ic10 { width: 10px; height: 10px; }
.n { font-family: "DejaVu Sans Mono", monospace; font-size: 10px; white-space: pre; }

/* title bar */
.titlebar { position: relative; flex: none; height: 23px; display: flex; align-items: center; padding-left: 2px; background: #fff; white-space: nowrap; }
.title-text { margin-left: 5px; flex: none; }
.title-end { margin-left: auto; flex: none; display: flex; justify-content: space-between; width: 124px; }
.winbtns { flex: none; display: flex; width: 142px; justify-content: space-between; padding: 0 20px; }
.ime { position: absolute; right: 266px; top: 3px; width: 179px; height: 24px; padding: 0 4px 0 27px; border: 1px solid #a9c3e0; background: #fdfeff; display: flex; align-items: center; justify-content: space-between; }
.ime b { color: #2272c4; font-size: 15px; }
.ime-logo { position: absolute; left: -6px; top: -5px; width: 28px; height: 28px; }
.ball { position: absolute; right: 209px; top: -30px; width: 49px; height: 49px; border: 2px solid #c9d6c9; border-radius: 50%; background: #45bf5a; box-shadow: 0 2px 5px #777; color: #fff; font-weight: 700; text-align: center; line-height: 72px; }

/* menu bar */
.menubar { flex: none; height: 27px; display: flex; align-items: center; gap: 11px; padding: 0 4px 0 3px; }
.menubar > .ic16 { margin-right: -5px; }
.with-ic { display: flex; align-items: center; gap: 4px; }
.mdi { margin-left: auto; display: flex; gap: 10px; }

/* toolbars */
.toolrow { flex: none; height: 27px; display: flex; gap: 2px; padding: 0 0 0 1px; }
.tg { height: 27px; display: flex; align-items: center; justify-content: space-between; padding: 0 6px 0 3px; border-radius: 3px; background: linear-gradient(#fcfcfc, #f1f1f1); white-space: nowrap; }
.g1 { width: 135px; }
.g2 { width: 176px; }
.g3 { width: 525px; padding-right: 3px; }
.g4 { width: 100px; padding-right: 9px; }
.g6 { width: 234px; }
.g7 { width: 998px; }
.grip { width: 3px; height: 16px; background: repeating-linear-gradient(#b5b5b5 0 2px, transparent 2px 4px); }
.sep { width: 1px; height: 14px; background: #b5b5b5; }
.arr { width: 5px; height: 3px; background: #000; clip-path: polygon(0 0, 100% 0, 50% 100%); }
.dim { background: #555; }
.dd { display: flex; align-items: center; gap: 8px; }
.tight { gap: 4px; }
.lb { display: flex; align-items: center; gap: 4px; }
.pressed { height: 23px; padding: 0 2px 0 3px; border: 1px solid #0078d7; background: #dcebf8; }
.partial { display: flex; align-items: center; gap: 8px; }
.ar { fill: #3c78d8; }
.off { fill: #c4c4c4; }
.muted { color: #6d6d6d; }
input[type="checkbox"] { appearance: none; display: block; width: 13px; height: 13px; margin: 0; border: 1px solid #333; background: #fff; }
.partial input[type="checkbox"] { width: 12px; height: 12px; border-color: #999; background: #f6f6f6; }

/* body */
.body { flex: 1; min-height: 0; display: flex; }
.side { position: relative; flex: none; width: 25px; margin: 0 4px 2px 0; overflow: hidden; border-right: 1px solid #a0a0a0; background: #f3f3f3; display: flex; flex-direction: column; }
.side::after { content: ""; position: absolute; right: 0; top: 0; bottom: 0; width: 1px; background: #696969; }
.side-top { flex: none; height: 6px; }
.side a { flex: none; margin-left: 2px; width: 22px; padding: 7px 5px; border-left: 1px solid #696969; background: #fff; color: #000; text-decoration: none; line-height: 13px; word-break: break-all; font-family: "Noto Sans CJK SC", sans-serif; }
.side .on { position: relative; z-index: 1; background: #f0f0f0; font-weight: 700; }
.joint { width: 24px; height: 12px; }
.side-scroll { position: absolute; left: 0; bottom: 2px; z-index: 2; display: flex; }
.side-scroll button { width: 12px; height: 12px; border: 1px solid #000; background: #c8c8c8; }
.work { flex: 1; min-width: 0; display: flex; flex-direction: column; }

.panel { display: flex; flex-direction: column; padding: 1px; border: 1px solid #a9a9ad; background: #fff; min-width: 0; }
.top { flex: none; }
.top-view { display: flex; }
.clip { flex: 1; min-width: 0; overflow: hidden; }
.fill { min-height: 0; }
.vscroll { flex: none; width: 17px; background: #f0f0f0; display: flex; flex-direction: column; align-items: center; padding: 6px 0 5px; }
.vscroll i { width: 15px; height: 17px; margin: auto 0 8px; background: #cdcdcd; }
.hscroll { flex: none; height: 16px; display: flex; align-items: center; gap: 6px; padding: 0 5px; background: #f0f0f0; }
.hscroll i { width: 17px; height: 15px; background: #cdcdcd; margin-right: auto; }
.end { padding-right: 21px; }
.end i { margin: 0 0 0 auto; }

/* grids */
.grid { border-collapse: separate; border-spacing: 0; table-layout: fixed; width: 0; font-family: "Noto Sans CJK SC", sans-serif; }
.grid th, .grid td { border: 0 solid #c0c0c0; border-width: 0 1px 1px 0; padding: 0 2px; overflow: hidden; white-space: nowrap; text-align: left; line-height: 16px; }
.grid th { height: 21px; padding: 0; background: #f0f0f0; font-weight: 400; text-align: center; }
.grid th.l { text-align: left; }
.grid th.sel { background: linear-gradient(#fadaa2, #f2c164); }
.grid td.r { text-align: right; padding-right: 3px; }
.grid td.c { text-align: center; }
.grid td.c input { margin: 0 auto; }
.grid td.n { font-family: "DejaVu Sans Mono", monospace; }
.grid td.b { font: bold 12px/16px "Liberation Mono", monospace; color: #00f; }
.upper td { height: 29px; }
.lower td { height: 19px; }
.upper td:first-child, .lower td:first-child { background: #f0f0f0; }
.grid td.cur { background: #ffd48a; }
.grid td.name { background: #d9eaf8; line-height: 13px; overflow: visible; }
.name .n { line-height: 1px; }
.grid .tree { padding: 0; line-height: 1px; }
.tree svg { display: inline-block; vertical-align: middle; }
.tree span { vertical-align: middle; }
.hl td { background: #a8dcfb; }
.grid td.no { padding: 0; text-align: center; font: 11px/16px "Open Sans", sans-serif; }
.grid td.code { padding-left: 20px; }
.grid td.pick { background: #d9eaf8; }
.grid td.org { background: #fffaf5; }
.exp { display: inline-block; vertical-align: middle; width: 13px; height: 13px; margin: 0 4px 0 1px; border: 1px solid #b5b5b5; background: linear-gradient(#000, #000) center / 7px 1px no-repeat, linear-gradient(#000, #000) center / 1px 7px no-repeat, #fff; }
.grid td.host { position: relative; overflow: visible; }
.redbox { position: absolute; z-index: 1; left: -8px; top: -1px; width: 156px; height: 24px; border: 3px solid #f00; }
.w21 { width: 21px; } .w34 { width: 34px; } .w38 { width: 38px; } .w39 { width: 39px; } .w41 { width: 41px; } .w49 { width: 49px; } .w57 { width: 57px; } .w75 { width: 75px; } .w81 { width: 81px; } .w109 { width: 109px; } .w119 { width: 119px; } .w125 { width: 125px; } .w127 { width: 127px; } .w228 { width: 228px; }

.splitter { flex: none; height: 8px; display: flex; justify-content: center; }
.splitter i { width: 100px; height: 6px; border: 1px solid #7c7c7c; background: #fff; }
.tabs { flex: none; display: flex; height: 21px; padding-left: 2px; margin-bottom: 1px; font-family: "Noto Sans CJK SC", sans-serif; }
.tabs button { padding: 0 11px; border-right: 1px solid #a0a0a0; margin-right: -1px; box-shadow: 1px 0 #fff; }
.tabs button + button { margin-right: 0; padding-right: 10px; }
.tabs .active { width: 71px; padding: 0; margin-right: 5px; border: 1px solid #696969; border-width: 2px 1px 1px 2px; border-right-color: #fff; border-bottom-color: #fff; background: #f8f8f8; }
.tabs .active + button { border-left: 1px solid #a0a0a0; }

.lower-row { flex: 1; min-height: 0; display: flex; padding-bottom: 2px; }
.bottom { flex: 1; }
.actions { flex: none; width: 128px; padding: 4px 6px 0; font-family: "Noto Sans CJK SC", sans-serif; }
.btns { display: grid; grid-template-columns: 1fr 1fr; gap: 5px 6px; padding: 0 8px 0 5px; }
.btns button { height: 24px; border: 1px solid #adadad; background: #e1e1e1; }
.btns .wide { grid-column: 1 / 3; }
fieldset { margin: 2px 0 0; padding: 9px 0 9px 1px; border: 1px solid #dcdcdc; display: grid; grid-template-columns: 67px 1fr; row-gap: 7px; min-width: 0; }
legend { margin-left: 5px; padding: 0 1px; }
fieldset label { display: flex; align-items: center; gap: 3px; }
input[type="radio"] { appearance: none; width: 13px; height: 13px; margin: 0; border: 1px solid #333; border-radius: 50%; background: #fff; }
input[type="radio"]:checked { background: radial-gradient(#333 0 3px, #fff 4px); }

/* status bar */
.status { flex: none; height: 20px; display: flex; gap: 2px; padding: 1px 1px 0 0; font-family: "Noto Sans CJK SC", sans-serif; white-space: nowrap; }
.status > span { border: 1px solid #d2d2d2; padding-left: 1px; line-height: 17px; overflow: hidden; background: linear-gradient(#fdfdfd, #f3f3f3); }
.s1 { flex: 359; } .s2 { flex: 360; } .s3 { flex: 215; } .s4 { flex: 237; } .s5 { flex: 188; }

/* task bar */
.taskbar { flex: none; height: 40px; display: flex; background: #000b0d; color: #fff; }
.start { width: 48px; display: grid; place-items: center; }
.search { width: 344px; display: flex; align-items: center; gap: 6px; padding: 0 15px 0 9px; background: #333; }
.search input { flex: 1; min-width: 0; padding: 0; border: 0; outline: 0; background: none; color: #fff; font: 14px "Noto Sans CJK SC", sans-serif; }
.search input::placeholder { color: #9a9a9a; opacity: 1; }
.apps { display: flex; gap: 1px; padding-left: 6px; }
.apps button { width: 48px; border: 4px solid transparent; border-width: 0 4px 2px; display: grid; place-items: center; background-clip: border-box; }
.apps .run { background: linear-gradient(#76b9ed, #76b9ed) bottom / 40px 2px no-repeat border-box; }
.apps .cur { background: linear-gradient(#76b9ed, #76b9ed) bottom / 48px 2px no-repeat border-box, #3a4446; }
.apps .hot { background: linear-gradient(#ff7a00, #ff7a00) bottom / 48px 2px no-repeat border-box, #9c5a24; }
.tray { flex: 1; display: flex; align-items: center; justify-content: flex-end; padding-right: 17px; }
.two { font-size: 12px; line-height: 18px; text-align: center; }
.t-up { margin-left: 20px; }
.t-bat { margin-left: 12px; }
.t-wifi { margin-left: 11px; }
.t-zh { margin-left: 9px; font-size: 13px; }
.t-s { margin-left: 14px; }
.clock { margin-left: 17px; }
.note { position: relative; margin-left: 18px; padding-right: 6px; }
.note span { position: absolute; right: 0; bottom: -8px; width: 16px; height: 16px; border: 1px solid #888; border-radius: 50%; background: #222; font-size: 11px; font-weight: 700; line-height: 14px; text-align: center; }
```
